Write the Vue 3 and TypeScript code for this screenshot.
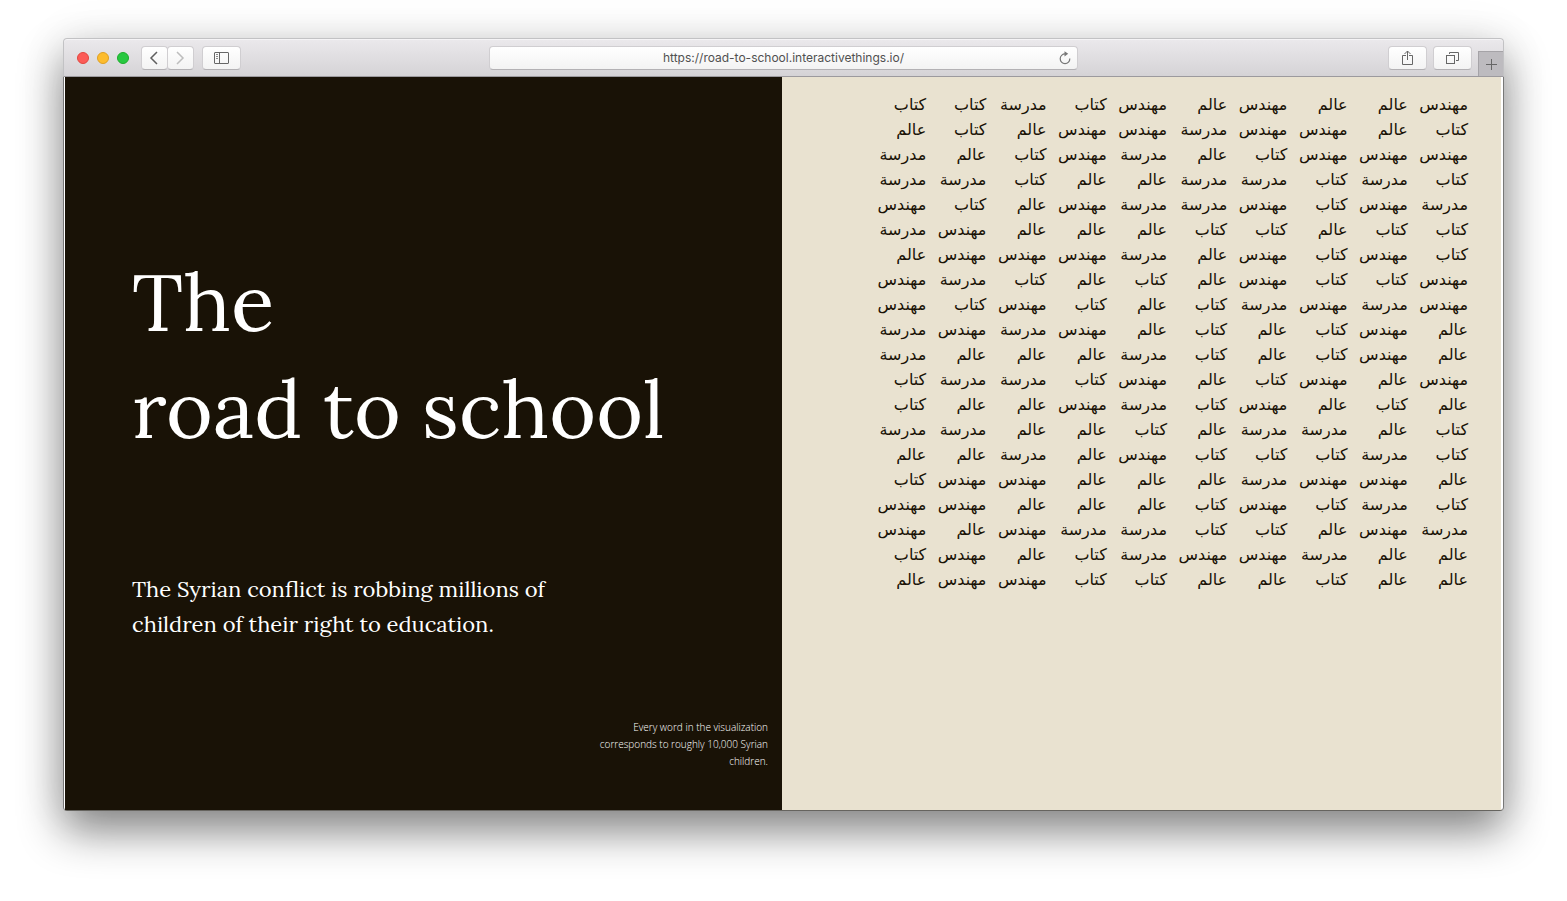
<script setup lang="ts">
import { ref } from 'vue'

type WordKey = 'm' | 'k' | 'a' | 'd'

const words: Record<WordKey, string> = {
  m: 'مهندس',
  k: 'كتاب',
  a: 'عالم',
  d: 'مدرسة',
}

// One string per line, read from right to left
const lines: string[] = [
  'maamamkdkk',
  'kammdmmaka',
  'mmmkadmkad',
  'kdkddaakdd',
  'dmkmddmakm',
  'kkakkaaamd',
  'kmkmadmmma',
  'mkkmakakdm',
  'mdmdkakmkm',
  'amkakamdmd',
  'amkakdaaad',
  'mamkamkddk',
  'akamkdmaak',
  'kaddakaadd',
  'kdkkkmadaa',
  'ammdaaammk',
  'kdkmkaaamm',
  'dmakkddmam',
  'aadmmdkamk',
  'aakaakkmma',
]

const cells: string[] = lines.join('').split('').map((key) => words[key as WordKey])
const address = ref('https://road-to-school.interactivethings.io/')
</script>

<template>
  <div class="desktop">
    <div class="window">
      <header class="toolbar">
        <div class="side">
          <div class="lights">
            <button class="light close" type="button" aria-label="Close"></button>
            <button class="light minimize" type="button" aria-label="Minimize"></button>
            <button class="light zoom" type="button" aria-label="Zoom"></button>
          </div>
          <nav class="history">
            <button class="tool narrow" type="button" aria-label="Back">
              <svg width="11" height="14" viewBox="0 0 11 14"><path d="M8 1 2 7l6 6" fill="none" stroke="#5f5f5f" stroke-width="1.5" /></svg>
            </button>
            <button class="tool narrow" type="button" aria-label="Forward">
              <svg width="11" height="14" viewBox="0 0 11 14"><path d="m2 1 6 6-6 6" fill="none" stroke="#bdbdbd" stroke-width="1.5" /></svg>
            </button>
          </nav>
          <button class="tool" type="button" aria-label="Sidebar">
            <svg width="17" height="12" viewBox="0 0 17 12" fill="none" stroke="#666" stroke-width="1">
              <rect x="1.5" y=".5" width="14" height="11" rx=".5" />
              <path d="M6.5 1v10" />
              <path d="M3 2.5h2M3 4.5h2M3 6.5h2" stroke="#8a8a8a" />
            </svg>
          </button>
        </div>
        <form class="address" @submit.prevent>
          <input v-model="address" type="text" aria-label="Address" spellcheck="false" />
          <button class="reload" type="button" aria-label="Reload">
            <svg width="12" height="14" viewBox="0 0 12 14"><path d="M6.5 3A4.8 4.8 0 1 0 10.8 7.5" fill="none" stroke="#777" stroke-width="1.2" /><path d="M5.5.2 9.2 2.8 5.5 5.4z" fill="#777" /></svg>
          </button>
        </form>
        <div class="side end">
          <button class="tool" type="button" aria-label="Share">
            <svg width="11" height="16" viewBox="0 0 11 16" fill="none" stroke="#666"><path d="M4 5.5H.5v9h10v-9H7M5.5 10V1M2.5 4l3-3 3 3" /></svg>
          </button>
          <button class="tool" type="button" aria-label="Show all tabs">
            <svg width="13" height="12" viewBox="0 0 13 12" fill="none" stroke="#666"><rect x=".5" y="3.5" width="8" height="8" /><path d="M3.5 2V.5h9v8H10" /></svg>
          </button>
          <button class="new-tab" type="button" aria-label="New tab">
            <svg width="11" height="11" viewBox="0 0 11 11"><path d="M5.5 0v11M0 5.5h11" stroke="#666" /></svg>
          </button>
        </div>
      </header>
      <main class="page">
        <section class="intro">
          <h1>The<br />road to school</h1>
          <p class="lead">The Syrian conflict is robbing millions of children of their right to education.</p>
          <p class="note">Every word in the visualization corresponds to roughly 10,000 Syrian children.</p>
        </section>
        <section class="chart" lang="ar" dir="rtl">
          <span v-for="(word, i) in cells" :key="i" class="word">{{ word }}</span>
        </section>
      </main>
    </div>
  </div>
</template>

<style>
body {
  margin: 0;
  background: #fff;
}
</style>

<style scoped>
.desktop {
  box-sizing: border-box;
  display: flex;
  min-height: 100vh;
  padding: 38px 63px 90px;
  overflow: hidden;
}

.window {
  flex: 1;
  display: flex;
  flex-direction: column;
  border-radius: 4px;
  box-shadow: 0 20px 44px rgba(0, 0, 0, 0.47), 0 0 50px rgba(0, 0, 0, 0.07);
}

.toolbar {
  display: grid;
  grid-template-columns: 1fr 41% 1fr;
  align-items: center;
  height: 37px;
  border: 1px solid #c2c2c4;
  border-bottom-color: #9c9a9e;
  border-radius: 4px 4px 0 0;
  background: linear-gradient(#ebe9ec, #d5d3d6);
  box-shadow: inset 0 1px #f5f4f6;
}

.side {
  display: flex;
  align-items: center;
  height: 100%;
}

.lights {
  display: flex;
  gap: 8px;
  margin: 0 12px 0 13px;
}

button {
  padding: 0;
  border: 0;
  background: none;
}

svg {
  display: block;
}

.light {
  width: 12px;
  height: 12px;
  border: 1px solid #e2463f;
  border-radius: 50%;
  background: #fc5b57;
}

.minimize {
  border-color: #dfa023;
  background: #fdbc2e;
}

.zoom {
  border-color: #1dad2b;
  background: #28c840;
}

.history {
  display: flex;
  margin-right: 8px;
}

.tool {
  display: flex;
  align-items: center;
  justify-content: center;
  box-sizing: border-box;
  width: 39px;
  height: 24px;
  border: 1px solid #d0ced1;
  border-bottom-color: #b3b1b4;
  border-radius: 4px;
  background: linear-gradient(#fff, #f3f3f3);
}

.narrow {
  width: 27px;
}

.narrow + .narrow {
  margin-left: -1px;
}

.address {
  display: grid;
  grid-template-columns: 24px 1fr 24px;
  align-items: center;
  box-sizing: border-box;
  height: 24px;
  border: 1px solid #d0ced1;
  border-bottom-color: #b3b1b4;
  border-radius: 4px;
  background: linear-gradient(#fff, #f3f3f3);
}

.address input {
  grid-column: 2;
  min-width: 0;
  padding: 0;
  border: 0;
  outline: 0;
  background: none;
  color: #505050;
  font: 12px/20px Inter, Roboto, sans-serif;
  text-align: center;
}

.reload {
  justify-self: center;
}

.end {
  justify-content: flex-end;
  gap: 6px;
}

.new-tab {
  display: flex;
  align-items: center;
  justify-content: center;
  align-self: flex-end;
  box-sizing: border-box;
  width: 25px;
  height: 25px;
  border: 1px solid #a5a3a7;
  border-width: 1px 0 0 1px;
  background: #bdbbbf;
}

.page {
  flex: 1;
  display: grid;
  grid-template-columns: 717fr 719fr;
  padding: 0 2px 0 1px;
  border: 1px solid #777;
  border-top: 0;
  border-bottom-color: #66645f;
  border-radius: 0 0 4px 4px;
  background: #fff;
}

.intro {
  display: flex;
  flex-direction: column;
  padding: 172px 14px 40px 67px;
  background: #191206;
  color: #fff;
  font-family: Lora, "Liberation Serif", serif;
}

h1 {
  margin: 0;
  font-size: 80px;
  font-weight: 400;
  line-height: 107px;
  white-space: nowrap;
}

.lead {
  max-width: 430px;
  margin: 109px 0 0;
  font-size: 22px;
  line-height: 35px;
}

.note {
  align-self: flex-end;
  max-width: 176px;
  margin: auto 0 0;
  color: #fff;
  font: 300 10px/17px "Open Sans", sans-serif;
  text-align: right;
}

.chart {
  display: grid;
  grid-template-columns: repeat(10, 1fr);
  grid-auto-rows: 25px;
  align-content: start;
  padding: 15px 33px 0 84px;
  background: #e9e2d0;
  color: #191206;
  font: 16px/25px "DejaVu Sans", sans-serif;
}

.word {
  min-width: 0;
  white-space: nowrap;
}
</style>
